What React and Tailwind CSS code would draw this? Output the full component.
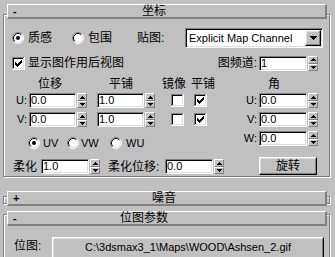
import React from "react";

const sunk =
  "bg-white border border-t-[#808080] border-l-[#808080] border-r-white border-b-white shadow-[inset_1px_1px_0_#000,inset_-1px_-1px_0_#dfdfdf]";
const raised =
  "bg-[#c0c0c0] border border-t-white border-l-white border-r-black border-b-black shadow-[inset_-1px_-1px_0_#808080,inset_1px_1px_0_#dfdfdf]";

function Radio({ on }) {
  return (
    <svg width="12" height="12" viewBox="0 0 12 12" className="shrink-0">
      <circle cx="6" cy="6" r="5" fill="#fff" />
      <path d="M2.11 9.89A5.5 5.5 0 0 1 9.89 2.11" fill="none" stroke="#808080" />
      <path d="M9.89 2.11A5.5 5.5 0 0 1 2.11 9.89" fill="none" stroke="#fff" />
      <path d="M2.82 9.18A4.5 4.5 0 0 1 9.18 2.82" fill="none" stroke="#000" />
      <path d="M9.18 2.82A4.5 4.5 0 0 1 2.82 9.18" fill="none" stroke="#dfdfdf" />
      {on && <circle cx="6" cy="6" r="2" fill="#000" />}
    </svg>
  );
}

function Check({ on }) {
  return (
    <svg width="13" height="13" viewBox="0 0 13 13" shapeRendering="crispEdges" className="shrink-0">
      <rect x="0" y="0" width="13" height="13" fill="#fff" />
      <path d="M0 0h12v1H1v11H0z" fill="#808080" />
      <path d="M1 1h10v1H2v9H1z" fill="#000" />
      <path d="M12 0h1v13H0v-1h12z" fill="#fff" />
      <path d="M11 1h1v11H1v-1h10z" fill="#dfdfdf" />
      {on && (
        <path
          d="M9 3h1v1H9zM8 4h2v1H8zM3 5h1v1H3zM7 5h3v1H7zM3 6h2v1H3zM6 6h3v1H6zM3 7h5v1H3zM4 8h3v1H4zM5 9h1v1H5z"
          fill="#000"
        />
      )}
    </svg>
  );
}

function Spinner() {
  return (
    <div className="ml-[1px] flex h-[15px] w-[10px] shrink-0 flex-col">
      <div className="flex h-[8px] items-center justify-center border border-t-white border-l-white border-r-[#808080] border-b-[#808080] bg-[#c0c0c0]">
        <svg width="5" height="3" viewBox="0 0 5 3" shapeRendering="crispEdges">
          <path d="M2 0h1v1H2zM1 1h3v1H1zM0 2h5v1H0z" fill="#000" />
        </svg>
      </div>
      <div className="flex h-[7px] items-center justify-center border border-t-white border-l-white border-r-[#808080] border-b-[#808080] bg-[#c0c0c0]">
        <svg width="5" height="3" viewBox="0 0 5 3" shapeRendering="crispEdges">
          <path d="M0 0h5v1H0zM1 1h3v1H1zM2 2h1v1H2z" fill="#000" />
        </svg>
      </div>
    </div>
  );
}

function Field({ w, v }) {
  return (
    <div className="flex shrink-0 items-center">
      <div className={`${w} h-[15px] ${sunk} flex items-center pl-[1px] text-[11px]`}>{v}</div>
      <Spinner />
    </div>
  );
}

function Title({ sign, text, ml, cls }) {
  return (
    <div
      className={`${cls} ml-[3px] flex h-[15px] w-[320px] shrink-0 items-center border-t border-l border-r-2 border-b-2 border-t-white border-l-white border-r-[#808080] border-b-[#808080] bg-[#c0c0c0]`}
    >
      <span className="ml-[5px] w-[6px] text-[11px] font-bold">{sign}</span>
      <span className={ml}>{text}</span>
    </div>
  );
}

const frame =
  "ml-[3px] w-[327px] shrink-0 border border-[#808080] shadow-[1px_1px_0_#fff,inset_1px_1px_0_#fff] flex flex-col";

export default function App() {
  return (
    <div className="flex h-[257px] w-[335px] flex-col overflow-hidden bg-[#c0c0c0] font-['Liberation_Sans','Noto_Sans_CJK_SC',sans-serif] text-[12px] leading-none text-black">
      {/* 坐标 rollout */}
      <div className={`${frame} mt-[14px] h-[163px]`}>
        <Title sign="-" text="坐标" ml="ml-[123px]" cls="-mt-[11px]" />

        <div className="mt-[9px] flex h-[20px] items-center">
          <span className="ml-[8px]"><Radio on /></span>
          <span className="ml-[4px] w-[44px]">质感</span>
          <Radio />
          <span className="ml-[4px] w-[49px]">包围</span>
          <span className="w-[48px]">贴图:</span>
          <div className={`flex h-[20px] w-[138px] items-center p-[1px] ${sunk}`}>
            <span className="flex-1 pl-[2px] text-[11px]">Explicit Map Channel</span>
            <div className={`flex h-[16px] w-[16px] items-center justify-center ${raised}`}>
              <svg width="7" height="4" viewBox="0 0 7 4" shapeRendering="crispEdges">
                <path d="M0 0h7v1H0zM1 1h5v1H1zM2 2h3v1H2zM3 3h1v1H3z" fill="#000" />
              </svg>
            </div>
          </div>
        </div>

        <div className="mt-[7px] flex h-[16px] items-center">
          <span className="ml-[8px]"><Check on /></span>
          <span className="ml-[3px] w-[188px]">显示图作用后视图</span>
          <span className="w-[43px] pr-[2px] text-right">图频道:</span>
          <Field w="w-[48px]" v="1" />
        </div>

        <div className="mt-[6px] flex h-[13px] items-center">
          <span className="ml-[34px] w-[71px]">位移</span>
          <span className="w-[53px]">平铺</span>
          <span className="w-[29px]">镜像</span>
          <span className="w-[77px]">平铺</span>
          <span>角</span>
        </div>

        {["U", "V"].map((k) => (
          <div key={k} className={`${k === "U" ? "mt-[3px]" : "mt-[4px]"} flex h-[15px] items-center`}>
            <span className="w-[25px] pr-[2px] text-right text-[11px]">{k}:</span>
            <Field w="w-[47px]" v="0.0" />
            <span className="ml-[10px]"><Field w="w-[47px]" v="1.0" /></span>
            <span className="ml-[16px]"><Check /></span>
            <span className="ml-[10px]"><Check on /></span>
            <span className="w-[52px] pr-[2px] text-right text-[11px]">{k}:</span>
            <Field w="w-[48px]" v="0.0" />
          </div>
        ))}

        <div className="flex">
          <div className="flex w-[236px] flex-col">
            <div className="mt-[10px] flex h-[12px] items-center text-[11px]">
              <span className="ml-[24px]"><Radio on /></span>
              <span className="ml-[3px] w-[24px]">UV</span>
              <Radio />
              <span className="ml-[2px] w-[29px]">VW</span>
              <Radio />
              <span className="ml-[4px]">WU</span>
            </div>
            <div className="mt-[10px] flex h-[15px] items-center">
              <span className="ml-[9px] w-[28px]">柔化</span>
              <Field w="w-[48px]" v="1.0" />
              <span className="ml-[8px] w-[57px]">柔化位移:</span>
              <Field w="w-[48px]" v="0.0" />
            </div>
          </div>
          <div className="flex flex-col">
            <div className="mt-[4px] flex h-[15px] items-center">
              <span className="w-[19px] pr-[2px] text-right text-[11px]">W:</span>
              <Field w="w-[48px]" v="0.0" />
            </div>
            <div className={`ml-[19px] mt-[11px] flex h-[18px] w-[58px] items-center justify-center ${raised}`}>
              旋转
            </div>
          </div>
        </div>
      </div>

      {/* 噪音 rollout (collapsed) */}
      <div className={`${frame} mt-[19px] h-[8px]`}>
        <Title sign="+" text="噪音" ml="ml-[133px]" cls="-mt-[6px]" />
      </div>

      {/* 位图参数 rollout */}
      <div className={`${frame} mt-[10px] h-[60px]`}>
        <Title sign="-" text="位图参数" ml="ml-[101px]" cls="-mt-[4px]" />
        <div className="mt-[11px] flex items-start">
          <span className="ml-[10px] mt-[3px] w-[38px]">位图:</span>
          <div className={`flex h-[22px] w-[272px] justify-center pt-[4px] text-[11px] ${raised}`}>
            C:\3dsmax3_1\Maps\WOOD\Ashsen_2.gif
          </div>
        </div>
      </div>
    </div>
  );
}
